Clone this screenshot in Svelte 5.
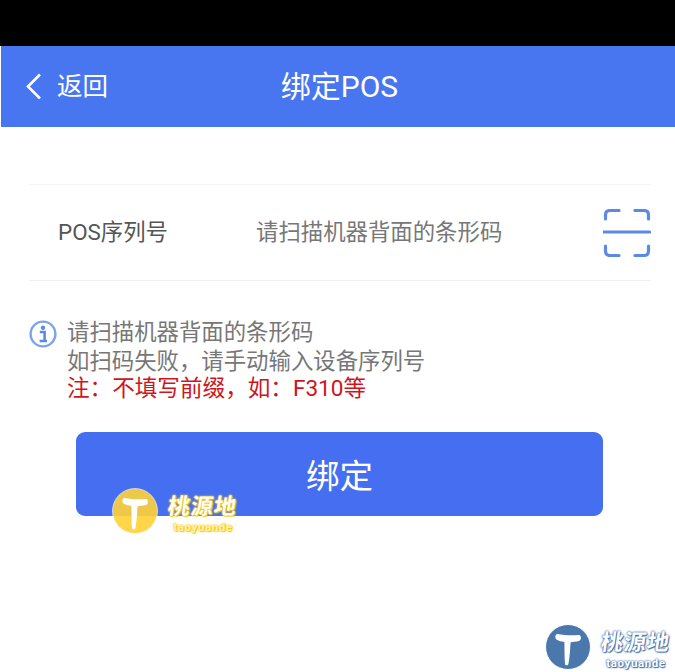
<script>
  // Bind POS page
  const notes = ['请扫描机器背面的条形码', '如扫码失败，请手动输入设备序列号'];
</script>

{#snippet badge(kind)}
  <div class="wm {kind}">
    <svg class="wm-logo" width="46" height="46" viewBox="0 0 46 46">
      <circle cx="23" cy="23" r="22.5" class="disc" />
      <path d="M12.5 10 C19 11.5 29 11.5 34 11 C36.5 11 36.5 16.5 34 17 C31 17.6 28 17.8 25.6 18.2 C25 26 24.8 33 23.4 40 C23 41.8 20.2 41.8 20 40 C19.4 33 19.6 25 19.4 18 C16.5 17.6 13.8 17 11.8 15.8 C9.6 14.4 10 10 12.5 10 Z" fill="#fff" />
    </svg>
    <div class="wm-text">
      <span class="wm-cn">桃源地</span>
      <span class="wm-en">taoyuande</span>
    </div>
  </div>
{/snippet}

<div class="page">
  <div class="statusbar"></div>

  <header>
    <button class="back" type="button">
      <svg width="18" height="26" viewBox="0 0 18 26" fill="none">
        <path d="M16 1.5 L4 13.5 L16 25.5" stroke="#fff" stroke-width="2.6" />
      </svg>
      <span>返回</span>
    </button>
    <h1>绑定POS</h1>
  </header>

  <main>
    <div class="field">
      <span class="label">POS序列号</span>
      <span class="placeholder">请扫描机器背面的条形码</span>
      <svg class="scan" width="48" height="48" viewBox="0 0 48 48" fill="none" stroke="#5b8ae6" stroke-width="3.2" stroke-linecap="round">
        <path d="M16 1.5 H7 Q2.5 1.5 2.5 6 V10" />
        <path d="M32 1.5 H41 Q45.5 1.5 45.5 6 V10" />
        <path d="M0.5 23 H46.5" />
        <path d="M2.5 37 V42 Q2.5 46.5 7 46.5 H16" />
        <path d="M45.5 37 V42 Q45.5 46.5 41 46.5 H32" />
      </svg>
    </div>

    <div class="notice">
      <svg class="info" width="28" height="28" viewBox="0 0 28 28" fill="none">
        <circle cx="14" cy="14" r="12.4" stroke="#7ba3e8" stroke-width="2.4" />
        <circle cx="14" cy="7.8" r="2.2" fill="#5b8ae6" />
        <path d="M10.8 12 H15.6 V20.5 M10.6 21 H18" stroke="#5b8ae6" stroke-width="2.6" />
      </svg>
      <div class="notice-text">
        {#each notes as line}
          <p>{line}</p>
        {/each}
        <p class="warn">注：不填写前缀，如：F310等</p>
      </div>
    </div>

    <button class="submit" type="button">绑定</button>
  </main>

  {@render badge('yellow')}
  {@render badge('blue')}
</div>

<style>
  :global(body) {
    margin: 0;
    background: #fff;
  }

  .page {
    position: relative;
    height: 672px;
    overflow: hidden;
    background: #fff;
    font-family: Roboto, "Noto Sans CJK SC", sans-serif;
  }

  .statusbar {
    height: 46px;
    background: #000;
  }

  header {
    position: relative;
    height: 81px;
    margin-left: 1px;
    padding-left: 3px;
    display: flex;
    align-items: center;
    justify-content: center;
    background: #4876f0;
    color: #fff;
  }

  .back {
    position: absolute;
    left: 23px;
    top: 25px;
    display: flex;
    align-items: center;
    gap: 15px;
    padding: 0;
    border: none;
    background: none;
    color: #fff;
    font: inherit;
    font-size: 25.5px;
    line-height: 30px;
  }

  h1 {
    margin: 0 0 5px;
    font-size: 30px;
    font-weight: 400;
  }

  main {
    padding: 57px 24px 0 29px;
  }

  .field {
    height: 95px;
    display: flex;
    align-items: center;
    padding-left: 29px;
    border-top: 1px solid #f5f5f7;
    border-bottom: 1px solid #f1f1f3;
  }

  .label {
    width: 198px;
    margin-bottom: 6px;
    font-size: 22.4px;
    color: #555;
  }

  .placeholder {
    flex: 1;
    margin-bottom: 6px;
    font-size: 22.4px;
    color: #777;
  }

  .notice {
    display: flex;
    gap: 10px;
    margin-top: 37px;
  }

  .info {
    flex: none;
    margin-top: 2px;
  }

  .notice-text p {
    margin: 0;
    font-size: 22.4px;
    line-height: 28.6px;
    color: #777;
  }

  .notice-text .warn {
    font-size: 22.6px;
    color: #d0141c;
  }

  .submit {
    display: block;
    width: 527px;
    height: 84px;
    margin: 28px 0 0 47px;
    border: none;
    border-radius: 9px;
    background: #456ff0;
    color: #fff;
    font: inherit;
    font-size: 33.5px;
  }

  .wm {
    position: absolute;
    display: flex;
    gap: 10px;
  }

  .wm.yellow {
    left: 112px;
    top: 488px;
  }

  .wm.blue {
    left: 545px;
    top: 624px;
  }

  .yellow .disc {
    fill: #ffd236;
    fill-opacity: 0.9;
    stroke: #fff;
    stroke-opacity: 0.6;
  }

  .blue .disc {
    fill: #4a78ad;
    stroke: #fff;
  }

  .wm-text {
    display: flex;
    flex-direction: column;
    align-items: center;
    width: 70px;
  }

  .wm-cn {
    margin-top: 5px;
    font-size: 22px;
    line-height: 28px;
    font-weight: 700;
    letter-spacing: 1px;
    white-space: nowrap;
    transform: skewX(-8deg);
  }

  .wm-en {
    font-size: 11.5px;
    line-height: 13px;
    font-weight: 700;
    letter-spacing: 0.6px;
  }

  .yellow .wm-text {
    color: #fffdf0;
    text-shadow: 0 0 2px #f5c518, 0 0 2px #f5c518, 1px 1px 1px #f5c518;
  }

  .yellow .wm-en {
    color: #fff3b0;
  }

  .blue .wm-text {
    color: #fff;
    text-shadow: 0 0 2px #3f6fa8, 0 0 2px #3f6fa8, 1px 1px 1px #3f6fa8;
  }
</style>
